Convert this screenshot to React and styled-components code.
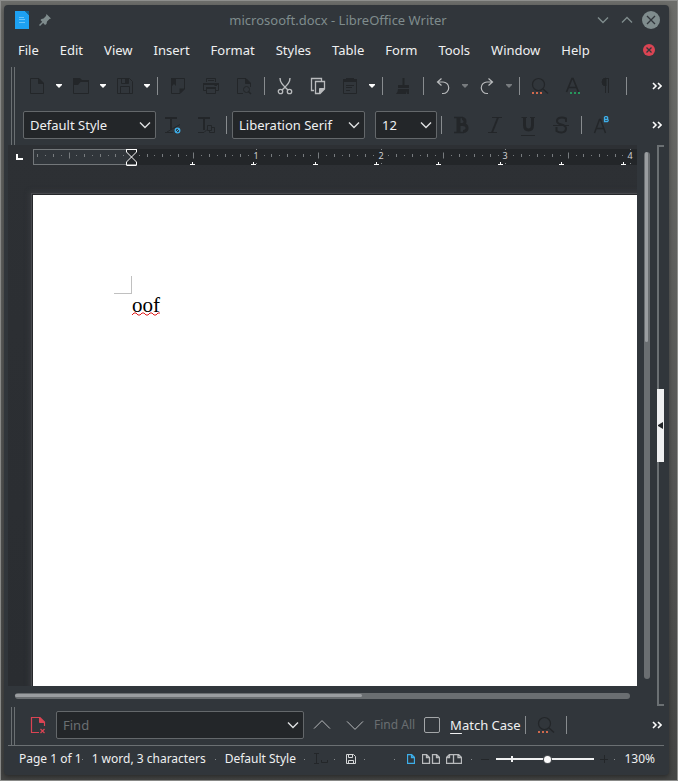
import React, { useLayoutEffect, useRef, useState } from "react";
import styled, { createGlobalStyle, css } from "styled-components";

const c = {
  window: "#31363b",
  field: "#232629",
  ink: "#232629",
  text: "#eff0f1",
  muted: "#7f8c8d",
  dim: "#6a6e71",
  line: "#6b7073",
  light: "#b9bbbd",
  blue: "#3daee9",
  red: "#da4453",
};

const GlobalStyle = createGlobalStyle`
  * { box-sizing: border-box; }
  html, body { margin: 0; }
  body {
    font-family: "Noto Sans", sans-serif;
    font-size: 13px;
    line-height: 18px;
    color: ${c.text};
  }
  button, input, select { font: inherit; color: inherit; }
  svg { display: block; flex: none; }
`;

const Desktop = styled.div`
  display: flex;
  min-height: 100vh;
  padding: 4px 8px 5px 3px;
  border: 1px solid #8d8e8c;
  background: linear-gradient(#6c6d6a, #555655 60%, #444544);
`;

const Window = styled.main`
  display: flex;
  flex-direction: column;
  flex: 1;
  min-width: 0;
  border-radius: 4px;
  background: ${c.window};
  box-shadow: 0 2px 5px rgba(0, 0, 0, 0.4);
  overflow: hidden;
`;

const TitleBar = styled.header`
  display: grid;
  grid-template-columns: 1fr auto 1fr;
  align-items: center;
  height: 30px;
  padding: 0 8px 0 11px;
`;

const TitleSide = styled.div`
  display: flex;
  align-items: center;
  justify-content: ${(p) => (p.$end ? "flex-end" : "flex-start")};
  gap: ${(p) => (p.$end ? 4 : 10)}px;
`;

const Title = styled.h1`
  margin: 0;
  font-size: 13px;
  font-weight: 400;
  color: ${c.muted};
`;

const PlainButton = styled.button`
  display: flex;
  align-items: center;
  justify-content: center;
  padding: 0;
  border: 0;
  background: none;
`;

const MenuBar = styled.nav`
  display: flex;
  align-items: center;
  gap: 1px;
  height: 31px;
  padding: 0 13px 2px 4px;
`;

const MenuItem = styled(PlainButton)`
  padding: 0 10px;
`;

const Spacer = styled.span`
  flex: 1;
`;

const Toolbars = styled.div`
  display: flex;
  padding: 0 5px 0 7px;
`;

const Handle = styled.span`
  width: 4px;
  flex: none;
  margin: 1px 0 0;
  border: solid ${c.line};
  border-width: 0 1px;
`;

const ToolbarRows = styled.div`
  flex: 1;
  min-width: 0;
  padding-bottom: 1px;
`;

const Toolbar = styled.div`
  display: flex;
  align-items: center;
  height: ${(p) => p.$height}px;
  padding-left: ${(p) => p.$inset}px;
`;

const ToolButton = styled(PlainButton)`
  justify-content: flex-start;
  width: 33px;
  height: 32px;
  padding-left: 5px;
`;

const SplitBox = styled.span`
  display: flex;
  width: 44px;
  padding-left: 4px;
  gap: 4px;
`;

const SplitMain = styled(PlainButton)`
  width: 22px;
`;

const SplitArrow = styled(PlainButton)`
  width: 14px;
`;

const Separator = styled.span`
  width: 1px;
  height: 18px;
  margin: 0 4px 0 3px;
  flex: none;
  background: #888c8f;
`;

const MoreButton = styled(PlainButton)`
  width: 14px;
  height: 24px;
`;

const SelectBox = styled.span`
  display: grid;
  align-items: center;
  width: ${(p) => p.$width}px;
  margin: 0 1px 0 ${(p) => p.$gap || 0}px;
  & > * { grid-area: 1 / 1; }
  & > svg { justify-self: end; margin-right: 5px; pointer-events: none; }
`;

const fieldStyle = css`
  width: 100%;
  height: 28px;
  margin: 0;
  padding: 0 6px;
  border: 1px solid #64686b;
  border-radius: 2px;
  background: ${c.field};
  outline: none;
`;

const Select = styled.select`
  ${fieldStyle}
  appearance: none;
`;

const FindInput = styled.input`
  ${fieldStyle}
  &::placeholder { color: #6b6f72; opacity: 1; }
`;

const Workspace = styled.section`
  display: grid;
  grid-template-columns: minmax(0, 1fr) 20px 7px;
  grid-template-rows: minmax(0, 1fr) 20px;
  flex: 1;
  padding: 0 5px 0 4px;
`;

const Canvas = styled.div`
  display: flex;
  flex-direction: column;
  background: linear-gradient(#2d3034, #2a2d31);
  overflow: hidden;
`;

const RulerRow = styled.div`
  display: flex;
  height: 50px;
  padding: 4px 0 0 7px;
`;

const Ruler = styled.svg`
  flex: 1;
  min-width: 0;
  height: 18px;
  font-size: 9px;
`;

const Page = styled.article`
  flex: 1;
  margin-left: 25px;
  padding: 81px 0 0 81px;
  background: #fff;
  color: #000;
  box-shadow: 0 0 0 1px #26282b, 0 0 0 2px #47494d, 0 0 5px 3px #3a3c40;
`;

const MarginCorner = styled.div`
  width: 18px;
  height: 18px;
  border: solid #c0c0c0;
  border-width: 0 1px 1px 0;
`;

const Paragraph = styled.p`
  display: grid;
  width: max-content;
  margin: 0 0 0 18px;
  font-family: "Liberation Serif", serif;
  font-size: 21px;
  line-height: 22px;
  & > * { grid-area: 1 / 1; }
  & > svg { align-self: end; }
`;

const VScroll = styled.div`
  width: 6px;
  margin: 7px;
  padding: 0 2px 0 1px;
  border-radius: 3px;
  background: #6a6e71;
`;

const VThumb = styled.div`
  height: 36%;
  border-radius: 2px;
  background: #9a9da0;
`;

const HScroll = styled.div`
  grid-area: 2 / 1;
  height: 6px;
  margin: 7px;
  padding: 1px 0 2px;
  border-radius: 3px;
  background: #6a6e71;
`;

const HThumb = styled.div`
  width: 56.5%;
  height: 3px;
  border-radius: 2px;
  background: #9a9da0;
`;

const Sidebar = styled.aside`
  grid-area: 1 / 3 / 3 / 4;
  display: flex;
  align-items: center;
  border: solid ${c.line};
  border-width: 2px 0 2px 2px;
`;

const SidebarToggle = styled(PlainButton)`
  width: 7px;
  height: 73px;
  flex: none;
  margin-left: -2px;
  background: #eff0f1;
`;

const FindBar = styled.form`
  display: flex;
  height: 40px;
  padding: 0 0 0 3px;
  margin: 0 5px 0 4px;
  border-bottom: 1px solid ${c.line};
`;

const FindRow = styled.div`
  display: flex;
  align-items: center;
  flex: 1;
  min-width: 0;
  padding: 0 0 1px 7px;
`;

const FindAll = styled(PlainButton)`
  margin-left: 3px;
  font-size: 12px;
  color: ${c.dim};
`;

const CheckLabel = styled.label`
  display: flex;
  align-items: center;
  gap: 10px;
  margin: 0 1px 0 9px;
`;

const Checkbox = styled.input`
  appearance: none;
  width: 16px;
  height: 16px;
  margin: 0;
  border: 1px solid #a4a7a9;
  border-radius: 2px;
`;

const Mnemonic = styled.u`
  text-underline-offset: 3px;
`;

const StatusBar = styled.footer`
  display: flex;
  align-items: center;
  height: 29px;
  padding: 0 14px 3px 15px;
  font-size: 12px;
`;

const Dot = styled.span`
  width: 1px;
  height: 1px;
  flex: none;
  margin: 0 9px 0 ${(p) => p.$before}px;
  background: #85898c;
`;

const StatusText = styled.span`
  white-space: nowrap;
`;

const StatusButton = styled(PlainButton)`
  width: ${(p) => p.$width}px;
  flex: none;
`;

const ZoomBox = styled.span`
  display: grid;
  align-items: center;
  width: 98px;
  & > * { grid-area: 1 / 1; }
`;

const ZoomTick = styled.span`
  width: 2px;
  height: 6px;
  margin-left: 15px;
  background: ${c.text};
`;

const ZoomRange = styled.input`
  appearance: none;
  width: 100%;
  height: 8px;
  margin: 0;
  background: linear-gradient(${c.text}, ${c.text}) center / 100% 2px no-repeat;
  &::-webkit-slider-thumb {
    appearance: none;
    width: 7px;
    height: 7px;
    border-radius: 50%;
    background: #fcfcfc;
    box-shadow: 0 0 0 1px #4d5154;
  }
`;

function Icon({ children, w = 22, h = 22, color = c.ink, fill = "none", stroke = 1 }) {
  return (
    <svg width={w} height={h} viewBox={`0 0 ${w} ${h}`} fill={fill}
      stroke={fill === "none" ? color : "none"} strokeWidth={stroke} aria-hidden="true">
      {children}
    </svg>
  );
}

const Chevron = ({ up, color = "#dfe1e2", size = 12 }) => (
  <Icon w={size} h={size} color={color} stroke={size > 14 ? 1 : 1.4}>
    <path d={up
      ? `M1 ${size * 0.7}L${size / 2} ${size * 0.7 - size / 2 + 1}L${size - 1} ${size * 0.7}`
      : `M1 ${size * 0.3}L${size / 2} ${size * 0.3 + size / 2 - 1}L${size - 1} ${size * 0.3}`} />
  </Icon>
);

const icons = {
  new: <Icon><path d="M4.5 3.5H13L17.5 8V18.5H4.5Z" /><path d="M12.5 3.5V8.5H17.5Z" fill={c.ink} /></Icon>,
  open: <Icon><path d="M3.5 6V18.5H18.5V6Z" /><path d="M3 3H10L12 5H19V7H10.5L8 10H3Z" fill={c.ink} stroke="none" /></Icon>,
  save: <Icon><path d="M3.5 3.5H15.5L18.5 6.5V18.5H3.5ZM6.5 18V11.5H15.5V18M7.5 3.5V8.5H14.5V3.5" /><path d="M11 4h3v4h-3z" fill={c.ink} stroke="none" /></Icon>,
  export: <Icon><path d="M9 3.5H17.5V14L13 18.5H4.5V13" /><path d="M4 3H9V11L7 9L4 12ZM12.500 13.500H18L12.500 19Z" fill={c.ink} stroke="none" /><path d="M4.500 3.500V13" /></Icon>,
  print: <Icon><path d="M6.500 7V3.500H15.500V7M6.500 15.500H3.500V8.500H18.500V15.500H15.500M6.500 12.500H15.500V18.500H6.500ZM8 5.500H14M14.500 10.500H17" /><path d="M3 8H19V10H3ZM6 12H16V14H6Z" fill={c.ink} stroke="none" /></Icon>,
  preview: <Icon><path d="M10 18.500H4.500V3.500H13L17.500 8V12" /><path d="M12.500 3.500V8.500H17.500Z" fill={c.ink} /><circle cx="13.500" cy="14.500" r="3" /><path d="M15.500 16.500L18 19" strokeWidth="1.500" /></Icon>,
  cut: <Icon color={c.light}><path d="M6 3C6 7 8 9.500 14 15M16 3C16 7 14 9.500 8 15" strokeWidth="1.400" /><circle cx="6.500" cy="16.500" r="2.200" strokeWidth="1.300" /><circle cx="15.500" cy="16.500" r="2.200" strokeWidth="1.300" /></Icon>,
  copy: <Icon color={c.light}><path d="M7 15.500H4.500V3.500H14.500V6M8.500 6.500H17.500V14L13 18.500H8.500Z" strokeWidth="1.300" /><path d="M12.500 13.500H17.500L12.500 18.500Z" fill={c.light} /></Icon>,
  paste: <Icon><path d="M4.500 4.500H17.500V18.500H4.500ZM7 10.500H15M7 12.500H13M7 15.500H11" /><path d="M4 4H7V3H15V4H18V7H4Z" fill={c.ink} stroke="none" /></Icon>,
  brush: <Icon fill={c.ink}><path fill={c.ink} d="M10.500 3H12.500V10H17V13H6V10H10.500ZM6 14H17V19H15V16L14 19H4Q6 17 6 14Z" /></Icon>,
  undo: <Icon color={c.light}><path d="M9.500 3.500L5.500 7L9.500 10.500M5.500 7H11A5.700 5.700 0 0 1 11 18.500H10" strokeWidth="1.200" /></Icon>,
  redo: <Icon color={c.light}><path d="M12.500 3.500L16.500 7L12.500 10.500M16.500 7H11A5.700 5.700 0 0 0 11 18.500H12" strokeWidth="1.200" /></Icon>,
  find: <Icon><circle cx="9.500" cy="9.500" r="6" strokeWidth="1.200" /><path d="M14 14L19 18.500" strokeWidth="1.500" /><path d="M3 17h2v2H3zM7 17h2v2H7zM11 17h2v2h-2z" fill="#d0694d" stroke="none" /></Icon>,
  spell: <Icon><path d="M4.500 17L10 3.500H11L16.500 17M6.500 12.500H14.500" strokeWidth="1.700" /><path d="M8 17h2v2H8zM12 17h2v2h-2zM16 17h2v2h-2z" fill="#27975c" stroke="none" /></Icon>,
  pilcrow: <Icon><path d="M10 3.500H14M10.500 3V18M13.500 3V18" /><path d="M11 3A4 4 0 0 0 11 11Z" fill={c.ink} /></Icon>,
  updateStyle: <Icon><path d="M3 4H15M9 4V16" strokeWidth="2" /><path d="M3 18.500H11M5 18L18 10.500" /><circle cx="15.500" cy="16.500" r="2.300" stroke={c.blue} strokeWidth="1.300" /><path d="M14 18L17 15" stroke={c.blue} /></Icon>,
  newStyle: <Icon><path d="M3 4H15M9 4V16" strokeWidth="2" /><path d="M3 18.500H9L12 15.500M12.500 11.500H16.500V16.500H12.500ZM16.500 13.500H19.500V18.500H14.500V16.500" /></Icon>,
  bold: <Icon><path d="M3 3.500H12M3 18.500H13" strokeWidth="1.500" /><path d="M11 4.500C15 4.500 15 10.500 11 10.500H8M11.500 10.500C17.500 10.500 17.500 17.500 12 17.500" strokeWidth="3" /><path d="M7.500 3V19" strokeWidth="4" /></Icon>,
  italic: <Icon><path d="M8 3.500H18M4 18.500H13" /><path d="M14 3.500L8 18.500" strokeWidth="2" /></Icon>,
  underline: <Icon><path d="M4.500 3.500H10M13 3.500H18" /><path d="M7.500 3V11Q7.500 16 11.500 16T15.500 11V3" strokeWidth="3" /><path d="M4 21.500H18" /></Icon>,
  strike: <Icon><path d="M16 8V4.500C12 2.500 7 3.500 7 7C7 12 16 9 16 14.500C16 19 10 19.500 6.500 17V13" strokeWidth="2" /><path d="M3 11.500H19" /></Icon>,
  superscript: <Icon><path d="M3.500 19L8.500 5.500H9.500L14.500 19M5.500 14.500H12.500" strokeWidth="1.500" /><path d="M13.500 3V7.500H16.500Q18 6.500 16.500 5.300H13.500H16Q17.500 4 16 2.700H13.500" stroke={c.blue} strokeWidth="1.300" /></Icon>,
  more: <Icon w={10} h={8} color="#fcfcfc" stroke={1.6}><path d="M1 1L4 4L1 7M6 1L9 4L6 7" /></Icon>,
  closeFind: <Icon color={c.red}><path d="M12 18.500H4.500V3.500H13L17.500 8V12M13.500 15L17.500 19M17.500 15L13.500 19" strokeWidth="1.200" /><path d="M12.500 3.500V8.500H17.500Z" fill={c.red} /></Icon>,
  app: (
    <Icon w={14} h={18}>
      <path d="M0 0H10L14 4V18H0Z" fill="#1da1f2" stroke="none" /><path d="M10 0H14V4Z" fill="#13608c" stroke="none" />
      <path d="M4 6.500H9M4 8.500H10M4 11.500H10" stroke="#6cc5f8" />
    </Icon>
  ),
  pin: <Icon w={12} h={12} color={c.muted}><path d="M7.500 0L12 4.500L10.500 5L8 7.500L7.500 10L6 11L1.500 6L2.500 5L4.500 4.500L7 2Z" fill={c.muted} stroke="none" /><path d="M4 8L0.500 11.500" strokeWidth="1.500" /></Icon>,
  statusInsert: <Icon w={14} h={12}><path d="M0 .5H5M2.500 0V11M0 10.500H5M7.500 7V9.500H13.500V7" /></Icon>,
  statusSave: <Icon w={10} h={10} color="#d6d8d9"><path d="M.5 .5H7.500L9.500 2.500V9.500H.5ZM2.500 .5V3.500H6.500V.5M2.500 9.500V6.500H7.500V9.500" /></Icon>,
  single: <Icon w={8} h={10} color={c.blue}><path d="M.5 .5H4.500L7.500 3.500V9.500H.5ZM4.500 .5V3.500H7.500" strokeWidth="1.300" /></Icon>,
  multi: <Icon w={18} h={10} color={c.light}><path d="M.5 .5H4.500L7.500 3.500V9.500H.5ZM4.500 .5V3.500H7.500M10.500 .5H14.500L17.500 3.500V9.500H10.500ZM14.500 .5V3.500H17.500" strokeWidth="1.300" /></Icon>,
  book: <Icon w={16} h={10} color={c.light}><path d="M7.500 .5H3.500L.5 3.500V9.500H15.500V3.500L12.500 .5H7.500V9.500M3.500 .5V3.500H.5M12 .5V3.500H15.500" strokeWidth="1.300" /></Icon>,
};

const Tool = ({ name, label }) => (
  <ToolButton type="button" aria-label={label}>{icons[name]}</ToolButton>
);

const Split = ({ name, label, dim }) => (
  <SplitBox>
    <SplitMain type="button" aria-label={label}>{icons[name]}</SplitMain>
    <SplitArrow type="button" aria-label={`${label} options`}>
      <Icon w={6} h={4} fill={dim ? "#777b7e" : "#fcfcfc"}><path d="M0 0H6V1L3 4L0 1Z" /></Icon>
    </SplitArrow>
  </SplitBox>
);

const More = () => <MoreButton type="button" aria-label="More">{icons.more}</MoreButton>;

const Combo = ({ label, value, width, gap }) => (
  <SelectBox $width={width} $gap={gap}>
    <Select aria-label={label} defaultValue={value}><option>{value}</option></Select>
    <Chevron />
  </SelectBox>
);

const ORIGIN = 98;
const INCH = 124.8;
const FIRST_TICK = -12;

function HorizontalRuler() {
  const ref = useRef(null);
  const [width, setWidth] = useState(0);

  useLayoutEffect(() => {
    const measure = () => setWidth(ref.current.getBoundingClientRect().width);
    measure();
    const observer = new ResizeObserver(measure);
    observer.observe(ref.current);
    return () => observer.disconnect();
  }, []);

  const lastTick = Math.floor((width - 4 - ORIGIN) / (INCH / 16));
  const tickCount = Math.max(0, lastTick - FIRST_TICK + 1);
  const ticks = Array.from({ length: tickCount }, (_, k) => k + FIRST_TICK);
  const tabCount = Math.max(0, Math.floor((width - ORIGIN) / 61.6));

  return (
    <Ruler ref={ref} role="img" aria-label="Ruler">
      <rect x="0" y="0" width="100%" height="16" fill={c.field} />
      <rect x="0.5" y="0.5" width={ORIGIN} height="15" fill={c.window} stroke="#73777a" />
      {ticks.map((i) => {
        const x = Math.round(ORIGIN + (INCH / 16) * i);
        if (i === 0) return null;
        if (i % 16 === 0) {
          return (
            <g key={i}>
              <path d={`M${x} .5h1M${x} 14.500h1`} stroke="#85898c" />
              <text x={x} y="10" textAnchor="middle" fill="#cfd1d3">{i / 16}</text>
            </g>
          );
        }
        const half = i % 8 === 0 ? 3 : i % 2 === 0 ? 1.5 : 0.5;
        return <path key={i} d={`M${x + 0.5} ${6.5 - half}V${6.5 + half}`} stroke="#777b7e" />;
      })}
      {Array.from({ length: tabCount }, (_, k) => {
        const x = Math.round(ORIGIN - 3 + 61.6 * (k + 1));
        return <path key={k} d={`M${x} 15.500H${x + 5}M${x + 2.5} 13V16`} stroke="#fcfcfc" />;
      })}
      <path d="M93.500 0V3L98.500 8L103.500 3V0M93.500 16V13L98.500 8L103.500 13V16Z M93.500 .5H103.500M93.500 16.500H103.500" fill={c.ink} stroke="#fcfcfc" />
    </Ruler>
  );
}

const menus = ["File", "Edit", "View", "Insert", "Format", "Styles", "Table", "Form", "Tools", "Window", "Help"];

export default function App() {
  return (
    <Desktop>
      <GlobalStyle />
      <Window>
        <TitleBar>
          <TitleSide>
            {icons.app}
            <PlainButton type="button" aria-label="Pin">{icons.pin}</PlainButton>
          </TitleSide>
          <Title>microsooft.docx - LibreOffice Writer</Title>
          <TitleSide $end>
            <StatusButton $width={20} type="button" aria-label="Minimize"><Chevron color={c.muted} /></StatusButton>
            <StatusButton $width={20} type="button" aria-label="Maximize"><Chevron up color={c.muted} /></StatusButton>
            <PlainButton type="button" aria-label="Close window">
              <Icon w={20} h={20} color={c.window} stroke={1.3}>
                <circle cx="10" cy="10" r="9" fill={c.muted} stroke="none" /><path d="M6 6L14 14M14 6L6 14" />
              </Icon>
            </PlainButton>
          </TitleSide>
        </TitleBar>

        <MenuBar>
          {menus.map((m) => <MenuItem key={m} type="button">{m}</MenuItem>)}
          <Spacer />
          <PlainButton type="button" aria-label="Close document">
            <Icon w={14} h={14} color={c.window} stroke={1.3}>
              <circle cx="7" cy="7" r="6" fill={c.red} stroke="none" /><path d="M4.500 4.500L9.500 9.500M9.500 4.500L4.500 9.500" />
            </Icon>
          </PlainButton>
        </MenuBar>

        <Toolbars>
          <Handle />
          <ToolbarRows>
            <Toolbar $height={40} $inset={7}>
              <Split name="new" label="New" />
              <Split name="open" label="Open" />
              <Split name="save" label="Save" />
              <Separator />
              <Tool name="export" label="Export as PDF" />
              <Tool name="print" label="Print" />
              <Tool name="preview" label="Print preview" />
              <Separator />
              <Tool name="cut" label="Cut" />
              <Tool name="copy" label="Copy" />
              <Split name="paste" label="Paste" />
              <Separator />
              <Tool name="brush" label="Clone formatting" />
              <Separator />
              <Split name="undo" label="Undo" dim />
              <Split name="redo" label="Redo" dim />
              <Separator />
              <Tool name="find" label="Find and replace" />
              <Tool name="spell" label="Spelling" />
              <Tool name="pilcrow" label="Formatting marks" />
              <Separator />
              <Spacer />
              <More />
            </Toolbar>
            <Toolbar $height={38} $inset={8}>
              <Combo label="Paragraph style" value="Default Style" width={133} />
              <Tool name="updateStyle" label="Update style" />
              <Tool name="newStyle" label="New style" />
              <Separator />
              <Combo label="Font name" value="Liberation Serif" width={133} gap={1} />
              <Combo label="Font size" value="12" width={62} gap={9} />
              <Separator />
              <Tool name="bold" label="Bold" />
              <Tool name="italic" label="Italic" />
              <Tool name="underline" label="Underline" />
              <Tool name="strike" label="Strikethrough" />
              <Separator />
              <Tool name="superscript" label="Superscript" />
              <Spacer />
              <More />
            </Toolbar>
          </ToolbarRows>
        </Toolbars>

        <Workspace>
          <Canvas>
            <RulerRow>
              <Icon w={18} h={18} color="#fcfcfc" stroke={2}><path d="M2 5V10H8" /></Icon>
              <HorizontalRuler />
            </RulerRow>
            <Page>
              <MarginCorner />
              <Paragraph>
                <span>oof</span>
                <Icon w={28} h={4} color="#e01b1b">
                  <path d="M0 3L2 1H4L6 3H8L10 1H12L14 3H16L18 1H20L22 3H24L26 1H28" />
                </Icon>
              </Paragraph>
            </Page>
          </Canvas>
          <VScroll><VThumb /></VScroll>
          <HScroll><HThumb /></HScroll>
          <Sidebar>
            <SidebarToggle type="button" aria-label="Show sidebar">
              <Icon w={5} h={7} fill={c.ink}><path d="M5 0V7L0 4V3Z" /></Icon>
            </SidebarToggle>
          </Sidebar>
        </Workspace>

        <FindBar onSubmit={(e) => e.preventDefault()}>
          <Handle />
          <FindRow>
            <ToolButton type="button" aria-label="Close find bar">{icons.closeFind}</ToolButton>
            <SelectBox $width={248} $gap={1}>
              <FindInput aria-label="Find" placeholder="Find" />
              <Chevron />
            </SelectBox>
            <StatusButton $width={33} type="button" aria-label="Find previous"><Chevron up size={18} color={c.light} /></StatusButton>
            <StatusButton $width={33} type="button" aria-label="Find next"><Chevron size={18} color={c.light} /></StatusButton>
            <FindAll type="button">Find All</FindAll>
            <CheckLabel>
              <Checkbox type="checkbox" />
              <span><Mnemonic>M</Mnemonic>atch Case</span>
            </CheckLabel>
            <Separator />
            <Tool name="find" label="Find and replace" />
            <Separator />
            <Spacer />
            <More />
          </FindRow>
        </FindBar>

        <StatusBar>
          <StatusText>Page 1 of 1</StatusText>
          <Dot $before={0} />
          <StatusText>1 word, 3 characters</StatusText>
          <Dot $before={9} />
          <StatusText>Default Style</StatusText>
          <Dot $before={8} />
          <StatusButton $width={14} type="button" aria-label="Insert mode">{icons.statusInsert}</StatusButton>
          <Dot $before={6} />
          <StatusButton $width={14} type="button" aria-label="Save status">{icons.statusSave}</StatusButton>
          <Dot $before={6} />
          <Dot $before={20} />
          <StatusButton $width={14} type="button" aria-label="Single page">{icons.single}</StatusButton>
          <StatusButton $width={26} type="button" aria-label="Multiple pages">{icons.multi}</StatusButton>
          <StatusButton $width={20} type="button" aria-label="Book view">{icons.book}</StatusButton>
          <Dot $before={7} />
          <StatusButton $width={9} type="button" aria-label="Zoom out"><Icon w={8} h={8}><path d="M0 4.500H8" /></Icon></StatusButton>
          <Spacer />
          <ZoomBox>
            <ZoomRange type="range" min="0" max="100" defaultValue="52" aria-label="Zoom" />
            <ZoomTick />
          </ZoomBox>
          <StatusButton $width={20} type="button" aria-label="Zoom in"><Icon w={8} h={8}><path d="M0 4.500H8M4.500 0V8" /></Icon></StatusButton>
          <Dot $before={0} />
          <StatusText>130%</StatusText>
        </StatusBar>
      </Window>
    </Desktop>
  );
}
